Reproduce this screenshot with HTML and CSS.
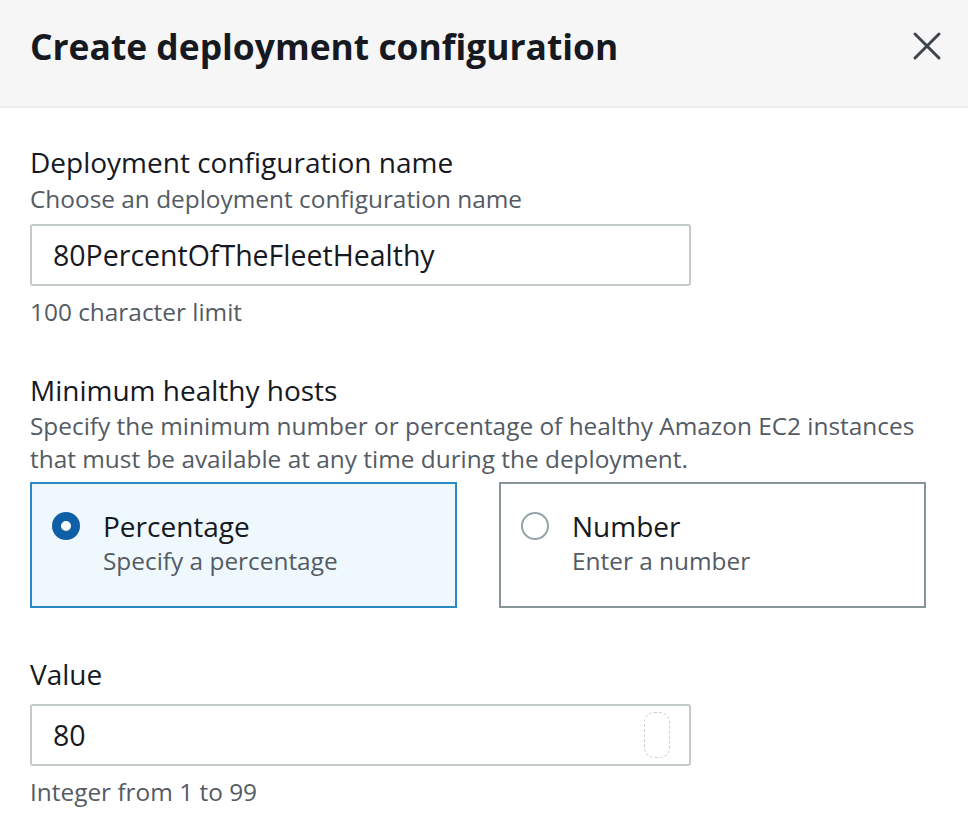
FILE: index.html
```html
<!DOCTYPE html>
<html>
<head>
<meta charset="utf-8">
<link rel="stylesheet" href="styles.css">
</head>
<body>
<div class="modal">
  <header class="modal-header">
    <h1 class="modal-title">Create deployment configuration</h1>
    <button class="close-btn" aria-label="Close">
      <svg width="30" height="30" viewBox="0 0 30 30"><path d="M3 3 L27 27 M27 3 L3 27" stroke="#3f444b" stroke-width="3" stroke-linecap="round" fill="none"/></svg>
    </button>
  </header>
  <div class="modal-body">
    <div class="field">
      <div class="label">Deployment configuration name</div>
      <div class="desc">Choose an deployment configuration name</div>
      <div class="input"><span class="input-text">80PercentOfTheFleetHealthy</span></div>
      <div class="hint">100 character limit</div>
    </div>
    <div class="field field-hosts">
      <div class="label">Minimum healthy hosts</div>
      <div class="desc">Specify the minimum number or percentage of healthy Amazon EC2 instances that must be available at any time during the deployment.</div>
      <div class="tiles">
        <div class="tile tile-selected">
          <span class="radio radio-on"></span>
          <div class="tile-text">
            <div class="tile-label">Percentage</div>
            <div class="tile-desc">Specify a percentage</div>
          </div>
        </div>
        <div class="tile">
          <span class="radio"></span>
          <div class="tile-text">
            <div class="tile-label">Number</div>
            <div class="tile-desc">Enter a number</div>
          </div>
        </div>
      </div>
    </div>
    <div class="field field-value">
      <div class="label">Value</div>
      <div class="input input-number"><span class="input-text">80</span><span class="spinner"></span></div>
      <div class="hint">Integer from 1 to 99</div>
    </div>
  </div>
</div>
</body>
</html>
```
FILE: styles.css
```css
* { box-sizing: border-box; }
html, body { margin: 0; padding: 0; background: #ffffff; }
body {
  font-family: "Open Sans", "Liberation Sans", sans-serif;
  color: #16191f;
  width: 968px;
  height: 837px;
  overflow: hidden;
}
.modal-header {
  height: 108px;
  background: #f6f6f6;
  border-bottom: 2px solid #eaeded;
  display: flex;
  align-items: center;
  justify-content: space-between;
  padding: 0 26px 14px 30px;
}
.modal-title {
  margin: 0;
  font-size: 35.4px;
  font-weight: 700;
  letter-spacing: 0;
  color: #16191f;
}
.close-btn {
  background: none;
  border: none;
  padding: 0;
  width: 30px;
  height: 30px;
  display: flex;
}
.modal-body {
  padding: 35px 30px 0 30px;
}
.label {
  font-size: 28px;
  line-height: 38px;
  color: #16191f;
}
.desc {
  margin-top: 1px;
  font-size: 24.4px;
  line-height: 33px;
  color: #545b64;
}
.input {
  margin-top: 9px;
  width: 661px;
  height: 62px;
  border: 2px solid #c2cacb;
  border-radius: 3px;
  display: flex;
  align-items: center;
  padding: 0 21px;
  justify-content: space-between;
}
.input-text {
  font-size: 28.5px;
  color: #16191f;
}
.hint {
  margin-top: 9px;
  font-size: 24.4px;
  line-height: 33px;
  color: #545b64;
}
.field-hosts { margin-top: 43px; }
.field-hosts .desc { margin-top: 0; }
.tiles {
  margin-top: 7px;
  display: flex;
  gap: 42px;
}
.tile {
  width: 427px;
  height: 126px;
  border: 2px solid #879596;
  display: flex;
  align-items: flex-start;
  padding: 25px 20px 0 20px;
  gap: 23px;
  background: #ffffff;
}
.tile-selected {
  border-color: #2a8bc4;
  background: #eef8fd;
}
.radio {
  flex: none;
  width: 28px;
  height: 28px;
  border-radius: 50%;
  border: 2px solid #95a5a6;
  margin-top: 3px;
  background: #fff;
}
.radio-on {
  border: 9px solid #0f5fa6;
  background: #ffffff;
}
.tile-label {
  font-size: 28px;
  line-height: 35px;
  color: #16191f;
}
.tile-desc {
  font-size: 24.4px;
  line-height: 33px;
  color: #545b64;
}
.field-value { margin-top: 47px; }
.field-value .input { margin-top: 11px; }
.spinner {
  width: 26px;
  height: 46px;
  border: 1px dashed #c8d0d0;
  border-radius: 10px;
  margin-right: -2px;
}
```
